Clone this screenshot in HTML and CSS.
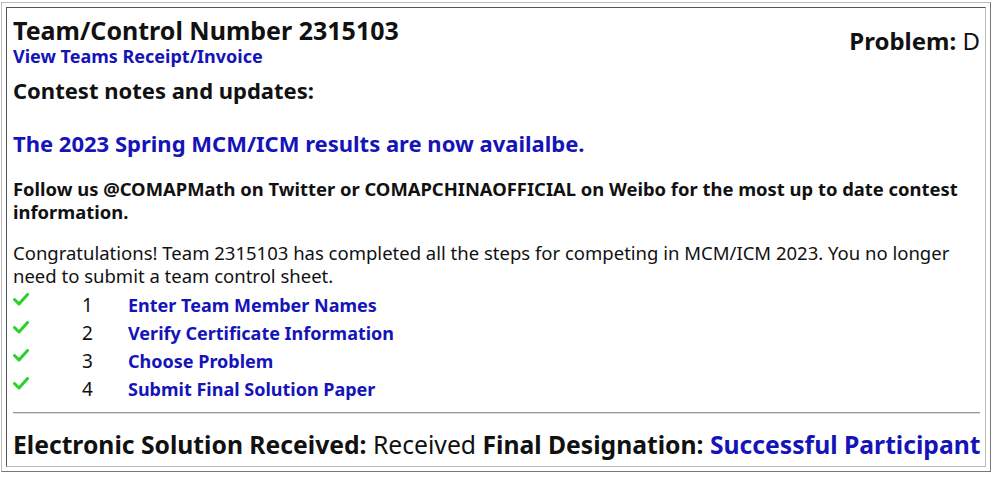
FILE: index.html
```html
<!DOCTYPE html>
<html>
<head>
<meta charset="utf-8">
<link rel="stylesheet" href="styles.css">
</head>
<body>
<div class="frame">
  <div class="panel">
    <div class="header">
      <div class="header-left">
        <div class="title">Team/Control Number 2315103</div>
        <a class="receipt" href="#">View Teams Receipt/Invoice</a>
      </div>
      <div class="problem"><b>Problem:</b> D</div>
    </div>
    <div class="notes-title">Contest notes and updates:</div>
    <div class="results">The 2023 Spring MCM/ICM results are now availalbe.</div>
    <div class="follow">Follow us @COMAPMath on Twitter or COMAPCHINAOFFICIAL on Weibo for the most up to date contest information.</div>
    <div class="congrats">Congratulations! Team 2315103 has completed all the steps for competing in MCM/ICM 2023. You no longer need to submit a team control sheet.</div>
    <div class="steps">
      <div class="step"><span class="check"><svg width="16" height="13" viewBox="0 0 16 13"><path d="M1.5 6.5 L6 11 L14.5 1.5" fill="none" stroke="#2ad12a" stroke-width="3" stroke-linecap="round" stroke-linejoin="round"/></svg></span><span class="num">1</span><a href="#">Enter Team Member Names</a></div>
      <div class="step"><span class="check"><svg width="16" height="13" viewBox="0 0 16 13"><path d="M1.5 6.5 L6 11 L14.5 1.5" fill="none" stroke="#2ad12a" stroke-width="3" stroke-linecap="round" stroke-linejoin="round"/></svg></span><span class="num">2</span><a href="#">Verify Certificate Information</a></div>
      <div class="step"><span class="check"><svg width="16" height="13" viewBox="0 0 16 13"><path d="M1.5 6.5 L6 11 L14.5 1.5" fill="none" stroke="#2ad12a" stroke-width="3" stroke-linecap="round" stroke-linejoin="round"/></svg></span><span class="num">3</span><a href="#">Choose Problem</a></div>
      <div class="step"><span class="check"><svg width="16" height="13" viewBox="0 0 16 13"><path d="M1.5 6.5 L6 11 L14.5 1.5" fill="none" stroke="#2ad12a" stroke-width="3" stroke-linecap="round" stroke-linejoin="round"/></svg></span><span class="num">4</span><a href="#">Submit Final Solution Paper</a></div>
    </div>
    <div class="rule"></div>
    <div class="status"><b>Electronic Solution Received:</b> Received <b>Final Designation:</b> <span class="designation">Successful Participant</span></div>
  </div>
</div>
</body>
</html>
```
FILE: styles.css
```css
html, body {
  margin: 0;
  padding: 0;
  background: #fff;
}
body {
  font-family: "Noto Sans", "Open Sans", sans-serif;
  color: #111;
  padding: 2px 0 0 1px;
}
.frame {
  box-sizing: border-box;
  width: 990px;
  height: 470px;
  border: 1px solid;
  border-color: #bbb #777 #777 #bbb;
  padding: 4px;
}
.panel {
  box-sizing: border-box;
  height: 460px;
  border: 1px solid;
  border-color: #555 #bbb #bbb #555;
  padding: 7px 5px 0 6px;
  display: flex;
  flex-direction: column;
}
a {
  color: #1414b8;
  text-decoration: none;
  font-weight: 700;
}
.header {
  display: flex;
  justify-content: space-between;
  align-items: center;
}
.header-left {
  display: flex;
  flex-direction: column;
}
.title {
  font-size: 25px;
  font-weight: 700;
  line-height: 30px;
}
.receipt {
  font-size: 18px;
  line-height: 22px;
}
.problem {
  font-size: 24px;
  line-height: 28px;
}
.notes-title {
  font-size: 22px;
  font-weight: 700;
  line-height: 24px;
  margin-top: 11px;
}
.results {
  color: #1414b8;
  font-size: 22px;
  font-weight: 700;
  line-height: 26px;
  margin-top: 28px;
}
.follow {
  font-size: 18.4px;
  font-weight: 700;
  line-height: 23px;
  margin-top: 21px;
}
.congrats {
  font-size: 18.5px;
  line-height: 23px;
  margin-top: 18px;
}
.steps {
  display: flex;
  flex-direction: column;
  margin-top: 4px;
}
.step {
  display: flex;
  align-items: center;
  height: 28px;
  font-size: 19px;
}
.check {
  width: 69px;
  align-self: flex-start;
  display: flex;
  padding-top: 2px;
}
.step a {
  font-size: 18px;
}
.num {
  width: 46px;
  font-weight: 400;
}
.rule {
  height: 0;
  border-top: 1px solid #999;
  border-bottom: 1px solid #ddd;
  margin-top: 9px;
}
.status {
  font-size: 24.7px;
  line-height: 28px;
  margin-top: 17px;
  white-space: nowrap;
}
.designation {
  color: #1414b8;
  font-weight: 700;
}
```
